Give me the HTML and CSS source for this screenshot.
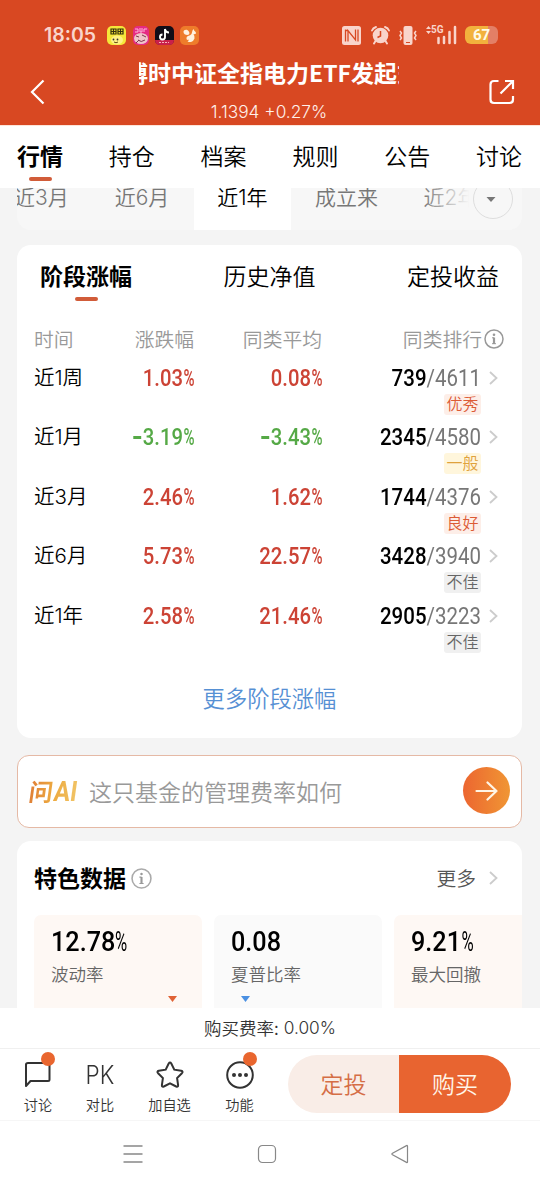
FILE: index.html
```html
<!DOCTYPE html>
<html lang="zh-CN">
<head>
<meta charset="utf-8">
<title>基金详情</title>
<link rel="stylesheet" href="styles.css">
</head>
<body>
<div class="app">
  <header class="header">
    <div class="status">
      <span class="clock">18:05</span>
      <div class="apps">
        <svg width="19" height="19" viewBox="0 0 19 19"><rect width="19" height="19" rx="5" fill="#f5e73a"/><path d="M4 3h5v5H4zM11 3h5v5h-5zM4 5.500h5M11 5.500h5M6.500 3v5M13.500 3v5" fill="none" stroke="#35310c" stroke-width="1.200"/><ellipse cx="10" cy="14" rx="6" ry="4.500" fill="#fff185"/><circle cx="6.500" cy="13.500" r=".9" fill="#333"/><circle cx="10.500" cy="13.500" r=".9" fill="#333"/><path d="M7 16q2 1.500 4 0" stroke="#654c10" fill="none"/></svg>
        <svg width="18" height="19" viewBox="0 0 18 19"><rect x="1" width="16" height="19" rx="5" fill="#e52b83"/><path d="M3 3h3v3H3M8 2v4h2V2M12 3v3M12 3h3" stroke="#ffb6de" fill="none"/><ellipse cx="9" cy="12.500" rx="7" ry="5.500" fill="#f0c4c9"/><path d="M4 10l3 1M10 9l4 2M6 14q3 3 7 0M4 17l3-3" stroke="#7c354c" fill="none"/></svg>
        <svg width="19" height="19" viewBox="0 0 19 19"><rect width="19" height="19" rx="5" fill="#120d18"/><path d="M0 14h19q0 5-5 5H5q-5 0-5-5" fill="#c9204a"/><path d="M10 3v8a2.500 2.500 0 1 1-2.500-2.500M10 3q.5 3.500 4 3.500" stroke="#fff" stroke-width="1.900" fill="none"/><path d="M4 16.500h10" stroke="#f6b1b9" stroke-dasharray="2 1"/></svg>
        <svg width="19" height="19" viewBox="0 0 19 19"><rect width="19" height="19" rx="5" fill="#ee7c2b"/><path d="M9 8.500C7 9.500 3.500 8.500 3.500 6 3.500 3.500 7 3 8.500 5c1 1.300 1.200 2.500.5 3.500zM12.500 4.500l1-1.500.8 1.800q2 1 1.700 2.700-1 1-2.500.8 1.500 2 1 4.200-.8 2.500-3.500 3.500H7.500q1.500-1 1-2.500L7 14q-1.500-2.500 1-4 2.500-.5 3.500-2z" fill="#fff2df"/></svg>
      </div>
      <div class="system">
        <svg class="nfc" width="19" height="19" viewBox="0 0 19 19"><rect width="19" height="19" rx="2.500" fill="#f9d4cb"/><path d="M6 15.500V4.500L13.500 14V3.500M3.500 3.500V15.500M6 4.500H3.500M16 3.500V15.500" fill="none" stroke="#d84822" stroke-width="1.300"/></svg>
        <svg class="alarm" width="19" height="20" viewBox="0 0 19 20"><circle cx="9.500" cy="10.500" r="7.800" fill="#f9d4cb"/><path d="M1 5.500Q2 3 5 2M18 5.500Q17 3 14 2M4.500 16l-1.500 2.500M14.500 16l1.500 2.500" stroke="#f9d4cb" stroke-width="1.900" fill="none" stroke-linecap="round"/><path d="M9.500 6v5l-3 1.500" fill="none" stroke="#d84822" stroke-width="1.500"/></svg>
        <svg class="vibrate" width="18" height="19" viewBox="0 0 18 19"><rect x="4.500" width="9" height="19" rx="2" fill="#f9d4cb"/><path d="M1 5l1.500 2-1.500 2.500L2.500 12 1 14M17 5l-1.500 2 1.500 2.500-1.500 2.500 1.500 2" fill="none" stroke="#f9d4cb" stroke-width="1.500"/><path d="M7 16.500h4" stroke="#d84822"/></svg>
        <span class="signal"><span class="fiveg">5G</span><svg width="32" height="20" viewBox="0 0 32 20"><path d="M1 4L3.500 1 6 4zM1 6h5L3.500 9z" fill="#f9d4cb"/><path d="M13.500 13v5M19 12v6M24.500 7v11M30 2v16" stroke="#f9d4cb" stroke-width="2.500" stroke-linecap="round"/></svg></span>
        <span class="battery"><b>67</b></span>
      </div>
    </div>
    <svg class="back" width="16" height="26" viewBox="0 0 16 26"><path d="M13.500 1.500L2 13l11.500 11.500" fill="none" stroke="#fff" stroke-width="2.200"/></svg>
    <div class="titles">
      <div class="marquee"><span>博时中证全指电力ETF发起式</span></div>
      <div class="quote">1.1394 +0.27%</div>
    </div>
    <svg class="share" width="26" height="26" viewBox="0 0 26 26"><path d="M9.500 2H5Q1.500 2 1.500 5.500v15Q1.500 24 5 24h15.500Q24 24 24 20.500V17M11.500 14.500L23 3M16 2h8v8" fill="none" stroke="#fff" stroke-width="2.200"/></svg>
  </header>

  <nav class="tabs">
    <span class="tab on">行情</span><span class="tab">持仓</span><span class="tab">档案</span><span class="tab">规则</span><span class="tab">公告</span><span class="tab">讨论</span>
  </nav>

  <main class="content">
    <div class="ranges">
      <span class="range first">近3月</span><span class="range">近6月</span><span class="range on">近1年</span><span class="range">成立来</span><span class="range last">近2年</span>
      <span class="fade"></span>
      <span class="drop"><svg width="10" height="7" viewBox="0 0 10 7"><path d="M.5 1h9L5 6z" fill="#777"/></svg></span>
    </div>

    <section class="card stage">
      <div class="subtabs"><span class="subtab on">阶段涨幅</span><span class="subtab">历史净值</span><span class="subtab">定投收益</span></div>
      <div class="row head"><span>时间</span><span>涨跌幅</span><span>同类平均</span><span class="rankhead">同类排行<svg width="20" height="20" viewBox="0 0 20 20"><circle cx="10" cy="10" r="9" fill="none" stroke="#999" stroke-width="1.500"/><path d="M10 8.500V15" stroke="#999" stroke-width="2.200"/><path d="M8 8.800h2M8 14.700h4" stroke="#999"/><circle cx="10" cy="5.700" r="1.300" fill="#999"/></svg></span></div>
      <div class="row"><span class="period">近1周</span><span class="num up">1.03<i>%</i></span><span class="num up">0.08<i>%</i></span><span class="num rank">739<em>/4611</em></span><svg class="chev" width="9" height="14" viewBox="0 0 9 14"><path d="M1 1l6.500 6L1 13"/></svg><span class="badge good">优秀</span></div>
      <div class="row"><span class="period">近1月</span><span class="num down"><s></s>3.19<i>%</i></span><span class="num down"><s></s>3.43<i>%</i></span><span class="num rank">2345<em>/4580</em></span><svg class="chev" width="9" height="14" viewBox="0 0 9 14"><path d="M1 1l6.500 6L1 13"/></svg><span class="badge fair">一般</span></div>
      <div class="row"><span class="period">近3月</span><span class="num up">2.46<i>%</i></span><span class="num up">1.62<i>%</i></span><span class="num rank">1744<em>/4376</em></span><svg class="chev" width="9" height="14" viewBox="0 0 9 14"><path d="M1 1l6.500 6L1 13"/></svg><span class="badge good">良好</span></div>
      <div class="row"><span class="period">近6月</span><span class="num up">5.73<i>%</i></span><span class="num up">22.57<i>%</i></span><span class="num rank">3428<em>/3940</em></span><svg class="chev" width="9" height="14" viewBox="0 0 9 14"><path d="M1 1l6.500 6L1 13"/></svg><span class="badge poor">不佳</span></div>
      <div class="row"><span class="period">近1年</span><span class="num up">2.58<i>%</i></span><span class="num up">21.46<i>%</i></span><span class="num rank">2905<em>/3223</em></span><svg class="chev" width="9" height="14" viewBox="0 0 9 14"><path d="M1 1l6.500 6L1 13"/></svg><span class="badge poor">不佳</span></div>
      <a class="morelink">更多阶段涨幅</a>
    </section>

    <section class="ask">
      <span class="ailogo"><span>问</span><b>AI</b></span>
      <span class="question">这只基金的管理费率如何</span>
      <span class="go"><svg width="24" height="20" viewBox="0 0 24 20"><path d="M1.500 10h20M12.500 1.500L21.500 10l-9 8.500" fill="none" stroke="#fff5e6" stroke-width="2.200" stroke-linecap="round" stroke-linejoin="round"/></svg></span>
    </section>

    <section class="card feature">
      <div class="fhead"><h2>特色数据</h2><svg width="21" height="21" viewBox="0 0 20 20"><circle cx="10" cy="10" r="9" fill="none" stroke="#aaa" stroke-width="1.500"/><path d="M10 8.500V15" stroke="#999" stroke-width="2"/><path d="M8 8.700h2M8 14.700h4" stroke="#999"/><circle cx="10" cy="5.700" r="1.200" fill="#999"/></svg><span class="more">更多</span><svg class="chev" width="9" height="14" viewBox="0 0 9 14"><path d="M1 1l6.500 6L1 13"/></svg></div>
      <div class="stats">
        <div class="stat warm"><span class="num big">12.78<i>%</i></span><span class="label">波动率</span><svg class="mark m1" width="9" height="6" viewBox="0 0 9 6"><path d="M0 0h9L4.500 6z" fill="#e06235"/></svg></div>
        <div class="stat"><span class="num big">0.08</span><span class="label">夏普比率</span><svg class="mark m2" width="9" height="6" viewBox="0 0 9 6"><path d="M0 0h9L4.500 6z" fill="#4a90e2"/></svg></div>
        <div class="stat warm"><span class="num big">9.21<i>%</i></span><span class="label">最大回撤</span></div>
      </div>
    </section>
  </main>

  <div class="fee">购买费率:<span>0.00%</span></div>
  <footer class="actions">
    <div class="act"><svg width="28" height="28" viewBox="0 0 28 28"><path d="M4 2h20q1.500 0 1.500 1.500v15q0 1.500-1.500 1.500H6.500L2 25V3.500Q2 2 4 2z" fill="none" stroke="#333" stroke-width="2" stroke-linejoin="round"/></svg><span>讨论</span><i class="dot"></i></div>
    <div class="act"><span class="pk">PK</span><span>对比</span></div>
    <div class="act"><svg width="30" height="28" viewBox="0 0 30 28"><path d="M13.700 2.500q1.300-2 2.600 0l3 6.200 6.900 1.100q2.300.6.700 2.400l-4.800 4.900 1 7q.2 2.200-1.900 1.400L15 22.300l-6.200 3.200q-2.100.8-1.900-1.400l1-7-4.800-4.900q-1.600-1.800.7-2.400l6.900-1.100z" fill="none" stroke="#333" stroke-width="2"/></svg><span>加自选</span></div>
    <div class="act"><svg width="28" height="28" viewBox="0 0 28 28"><circle cx="14" cy="14" r="12.800" fill="none" stroke="#333" stroke-width="2"/><circle cx="8" cy="14" r="2" fill="#333"/><circle cx="14" cy="14" r="2" fill="#333"/><circle cx="20" cy="14" r="2" fill="#333"/></svg><span>功能</span><i class="dot"></i></div>
    <div class="buttons"><span class="plan">定投</span><span class="buy">购买</span></div>
  </footer>
  <div class="sysnav">
    <svg width="20" height="20" viewBox="0 0 20 20"><path d="M.5 2h19M.5 10h19M.5 18h19" stroke="#888" stroke-width="1.400"/></svg>
    <svg width="20" height="20" viewBox="0 0 20 20"><rect x="1.500" y="1.500" width="17" height="17" rx="4" fill="none" stroke="#888" stroke-width="1.200"/></svg>
    <svg width="20" height="20" viewBox="0 0 20 20"><path d="M17.500 2v16q0 .8-1 .4L2.500 10.800q-1.200-.8 0-1.600L16.500 1.600q1-.4 1 .4z" fill="none" stroke="#888" stroke-width="1.200"/></svg>
  </div>
</div>
</body>
</html>
```
FILE: styles.css
```css
* { box-sizing: border-box; }
body { margin: 0; }
.app {
  width: 540px; height: 1187px; overflow: hidden;
  display: flex; flex-direction: column;
  background: #f4f4f4; color: #000;
  font-family: "Noto Sans CJK SC", sans-serif; font-weight: 350;
  white-space: nowrap;
}
svg { display: block; flex: none; }

.header {
  height: 125px; flex: none; background: #d84822; color: #fff;
  display: grid; grid-template-columns: 139px 260px 1fr; grid-template-rows: 58px 67px;
}
.status { grid-column: 1 / 4; display: flex; align-items: center; padding: 12px 42px 0 44px; height: 58px; }
.clock { font: 600 19.500px/24px Inter, sans-serif; color: #f9d4cb; width: 63px; }
.apps { display: flex; gap: 5.500px; }
.system { display: flex; align-items: center; margin-left: auto; }
.alarm { margin-left: 10px; }
.vibrate { margin-left: 9px; }
.signal { position: relative; margin-left: 8px; }
.fiveg { position: absolute; left: 6px; top: 0; font: 700 10px/10px Roboto, sans-serif; color: #f9d4cb; }
.battery {
  margin-left: 8px; width: 33px; height: 18px; border-radius: 6px;
  background: linear-gradient(90deg, #f2b23d 69%, #e37f66 69%);
  display: flex; justify-content: center;
}
.battery b { font: 700 15px/18px Roboto, sans-serif; color: #fffbe8; }
.back { margin: 21px 0 0 30px; }
.share { margin: 21px 0 0 90px; }
.marquee { height: 34px; overflow: hidden; font-weight: 700; font-size: 23px; line-height: 29px; }
.marquee span { display: inline-block; margin-left: -14px; }
.quote { font: 300 17.300px/24px Inter, sans-serif; text-align: center; margin-top: 8px; color: #fff0ea; }

.tabs {
  height: 63px; flex: none; background: #fff; border-top: 1px solid #fde5da;
  display: flex; justify-content: space-between; padding: 0 18px 0 17px; font-size: 23px; line-height: 59px;
}
.tab { width: 46px; text-align: center; }
.on { font-weight: 700; }
.tab.on::after, .subtab.on::after {
  content: ""; display: block; width: 23px; height: 4px; border-radius: 2px; background: #d15c39; margin: -8px auto 0;
}

.content { height: 820px; flex: none; overflow: hidden; padding: 0 18px 0 17px; }
.ranges {
  position: relative; height: 42px; display: flex; overflow: hidden; background: #f7f7f7;
  border-radius: 0 0 14px 14px; color: #777; font-family: Inter, "Noto Sans CJK SC", sans-serif; font-size: 21px; line-height: 20px;
}
.range { width: 104px; text-align: center; flex: none; }
.range.first { width: 73px; text-align: left; text-indent: -3px; }
.range.on { width: 97px; background: #fff; color: #000; font-weight: 350; }
.range.last { width: 98px; }
.range:nth-child(4) { width: 111px; }
.fade { position: absolute; right: 50px; top: 0; width: 50px; height: 42px; background: linear-gradient(90deg, #f7f7f700, #f7f7f7 95%); }
.drop {
  position: absolute; right: 0; top: -9px; width: 50px; height: 51px; background: #f7f7f7;
  display: flex; align-items: center; justify-content: center;
}
.drop::before {
  content: ""; position: absolute; left: 1px; top: 0; width: 38px; height: 38px;
  border: 1px solid #ddd; border-radius: 50%;
}
.drop svg { margin: -11px 12px 0 0; }

.card { background: #fff; border-radius: 14px; }
.stage { height: 493px; margin-top: 15px; }
.subtabs { display: flex; justify-content: space-between; height: 78px; padding: 0 23px; font-size: 23px; line-height: 60px; }
.subtab.on::after { margin-top: -8px; }
.row {
  display: grid; height: 59.400px; padding-left: 17px; align-items: center;
  grid-template-columns: 60px 100px 128px 159px 24px; grid-template-rows: 32px 21px; align-content: start;
}
.row > span { text-align: right; }
.row > .period { text-align: left; font-family: Inter, "Noto Sans CJK SC", sans-serif; font-size: 20.500px; line-height: 30px; }
.row.head { height: 39px; color: #999; font-size: 19.800px; line-height: 32px; }
.row.head > span:first-child { text-align: left; }
.row > .rankhead { display: flex; justify-content: flex-end; align-items: center; gap: 2px; margin-right: -23px; }
.num { position: relative; top: 1px; font-family: Roboto, sans-serif; font-weight: 500; font-size: 23px; line-height: 32px; transform: scaleX(.88); transform-origin: right; }
.num i { display: inline-block; font-style: normal; font-weight: 500; width: 12.500px; transform: scaleX(.74); transform-origin: left; text-align: left; }
.num s { display: inline-block; width: 9px; height: 2.500px; margin: 0 2px 6.500px 0; background: currentColor; }
.num em { font-style: normal; font-weight: 400; color: #777; }
.num.rank { transform: scaleX(.89); }
.up { color: #cc4335; }
.down { color: #55a946; }
.chev { margin-left: 8px; }
.chev path { fill: none; stroke: #ccc; stroke-width: 1.800; }
.badge { grid-column: 4; justify-self: end; width: 37px; height: 21px; border-radius: 3px; font-size: 16px; line-height: 19px; }
.row > .badge { text-align: center; }
.good { color: #dc5b35; background: #fdeee8; }
.fair { color: #dfa23c; background: #fff6dc; }
.poor { color: #666; background: #f0f0f0; }
.morelink { display: block; text-align: center; font-size: 22.300px; line-height: 32px; margin-top: 22px; color: #5690d4; }

.ask {
  height: 73px; margin-top: 17px; border: 1px solid #e5b9a5; border-radius: 12px; background: #fff;
  display: flex; align-items: center; padding: 0 11px;
}
.ailogo { display: flex; align-items: center; width: 60px; font-weight: 700; font-size: 24px; line-height: 33px; transform: skewX(-8deg); }
.ailogo span { background: linear-gradient(90deg, #df7e36, #edaa40); -webkit-background-clip: text; background-clip: text; color: transparent; margin-top: -3px; }
.ailogo b { font: 700 28px/30px Roboto, sans-serif; margin-left: 1px; transform: scaleX(.87); transform-origin: left; background: linear-gradient(90deg, #edaa40, #f1c466); -webkit-background-clip: text; background-clip: text; color: transparent; }
.question { color: #999; font-size: 23px; margin-top: -2px; }
.go { width: 47px; height: 47px; margin: -2px 0 0 auto; border-radius: 50%; background: linear-gradient(90deg, #ec6630, #f09634); display: flex; align-items: center; justify-content: center; }

.feature { margin-top: 13px; height: 220px; overflow: hidden; }
.fhead { display: flex; align-items: center; height: 74px; padding: 0 24px 0 17px; }
h2 { margin: -2px 5px 0 0; font-size: 23px; font-weight: 700; }
.more { margin: -2px 5px 0 auto; font-size: 19.800px; color: #555; }
.stats { display: flex; gap: 12px; padding-left: 17px; }
.stat { position: relative; flex: none; width: 168px; height: 110px; background: #fafafa; border-radius: 7px; padding: 9px 17px; display: flex; flex-direction: column; }
.warm { background: #fef8f4; }
.big { font-size: 28px; line-height: 36px; top: 0; transform: scaleX(.9); transform-origin: left; }
.big i { transform: scaleX(.66); font-weight: 400; }
.label { color: #666; font-size: 17.500px; line-height: 28px; }
.mark { position: absolute; top: 81px; }
.m1 { left: 134px; }
.m2 { left: 27px; }

.fee { height: 40px; flex: none; background: #fff; color: #333; display: flex; justify-content: center; gap: 5px; font-size: 17.500px; line-height: 39px; }
.fee span { font: 350 17.300px/40px Inter, sans-serif; }
.actions { height: 72px; flex: none; background: #fff; border-top: 1px solid #f0f0f0; display: flex; padding-left: 7px; }
.act { position: relative; width: 62px; padding-top: 12px; display: flex; flex-direction: column; align-items: center; color: #333; font-size: 14.200px; line-height: 31px; }
.act:nth-child(3) { width: 77px; }
.act:nth-child(4) { width: 63px; }
.act .pk { font: 350 25px/28px Inter, sans-serif; transform: scaleX(.9); }
.dot { position: absolute; right: 14px; top: 3px; width: 14px; height: 14px; border-radius: 50%; background: #e9662f; }
.buttons { display: flex; margin: 6px 0 0 17px; width: 223px; height: 58px; border-radius: 29px; overflow: hidden; font-size: 23px; line-height: 56px; text-align: center; }
.plan { width: 111px; background: #f9ede7; color: #d56e46; }
.buy { flex: 1; background: #e86430; color: #fff5e8; }
.sysnav { flex: 1; background: #fff; border-top: 1px solid #f6f6f6; display: flex; justify-content: space-between; align-items: center; padding: 0 130px 0 123px; }
```
